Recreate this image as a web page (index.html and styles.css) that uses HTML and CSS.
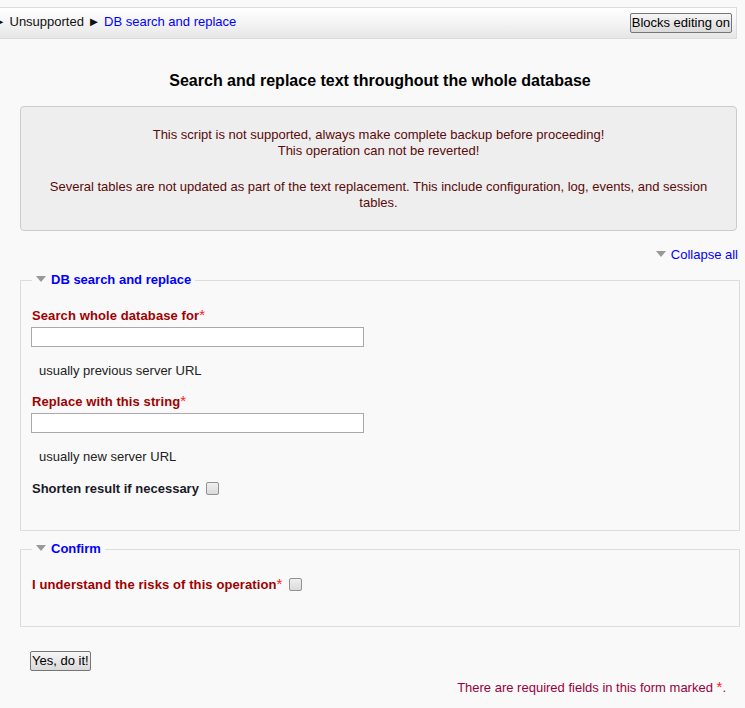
FILE: index.html
```html
<!DOCTYPE html>
<html lang="en">
<head>
<meta charset="utf-8">
<title>DB search and replace</title>
<link rel="stylesheet" href="styles.css">
</head>
<body>
<div class="navbar">
  <div class="breadcrumb"><span class="sep">►</span> Unsupported <span class="sep">►</span> <a href="#" class="link">DB search and replace</a></div>
  <button class="btn" type="button">Blocks editing on</button>
</div>
<div class="main">
  <h2 class="title">Search and replace text throughout the whole database</h2>
  <div class="notice">
    <p class="notice-p">This script is not supported, always make complete backup before proceeding!<br>This operation can not be reverted!</p>
    <p class="notice-p notice-gap">Several tables are not updated as part of the text replacement. This include configuration, log, events, and session tables.</p>
  </div>
  <div class="collapse-row"><a href="#" class="link collapse-link"><span class="tri"></span>Collapse all</a></div>
  <form class="mform">
    <fieldset class="fs">
      <legend class="fs-legend"><span class="tri"></span>DB search and replace</legend>
      <div class="lbl req first">Search whole database for<span class="ast">*</span></div>
      <input class="txt" type="text">
      <div class="help">usually previous server URL</div>
      <div class="lbl req">Replace with this string<span class="ast">*</span></div>
      <input class="txt" type="text">
      <div class="help">usually new server URL</div>
      <div class="lbl plain">Shorten result if necessary <input class="chk" type="checkbox"></div>
    </fieldset>
    <fieldset class="fs fs-second">
      <legend class="fs-legend"><span class="tri"></span>Confirm</legend>
      <div class="lbl req first">I understand the risks of this operation<span class="ast">*</span> <input class="chk" type="checkbox"></div>
    </fieldset>
    <div class="submit-row"><button class="btn" type="button">Yes, do it!</button></div>
    <div class="req-note">There are required fields in this form marked <span class="ast">*</span>.</div>
  </form>
</div>
</body>
</html>
```
FILE: styles.css
```css
html, body {
  margin: 0;
  padding: 0;
}
body {
  background: #f9f9f9;
  font-family: "Liberation Sans", Arial, sans-serif;
  font-size: 13px;
  line-height: 16px;
  color: #222;
  overflow: hidden;
}
.navbar {
  margin: 7px 8px 0 -20px;
  height: 30px;
  border: 1px solid #dcdcdc;
  border-left: none;
  background: linear-gradient(#ffffff, #f4f4f4 50%, #e6e6e6);
  display: flex;
  align-items: center;
  justify-content: space-between;
  padding: 0 4px 0 13px;
}
.breadcrumb {
  color: #111;
  white-space: nowrap;
  margin-top: -2px;
}
.sep {
  color: #111;
}
.link {
  color: #0000ff;
  text-decoration: none;
}
.btn {
  font-family: "Liberation Sans", Arial, sans-serif;
  font-size: 13px;
  line-height: 16px;
  height: 20px;
  padding: 0 1px;
  border: 1px solid #767676;
  border-radius: 2px;
  background: linear-gradient(#f6f6f6, #e8e8e8 50%, #dadada);
  color: #000;
}
.main {
  margin: 0 5px 0 20px;
}
.title {
  margin: 32px 0 16px;
  font-size: 16px;
  line-height: 19px;
  font-weight: bold;
  text-align: center;
  color: #000;
}
.notice {
  margin-right: 3px;
  border: 1px solid #cccccc;
  border-radius: 4px;
  background: #eeeeee;
  padding: 20px 15px 19px;
  text-align: center;
  color: #5a0a0a;
}
.notice-p {
  margin: 0;
}
.notice-gap {
  margin-top: 20px;
}
.collapse-row {
  margin-top: 16px;
  text-align: right;
  padding-right: 2px;
}
.tri {
  display: inline-block;
  width: 0;
  height: 0;
  border-left: 5px solid transparent;
  border-right: 5px solid transparent;
  border-top: 6px solid #999;
  margin-right: 5px;
  vertical-align: 2px;
}
.mform {
  margin: 0;
}
.fs {
  margin: 9px 0 0;
  border: 1px solid #dcdcdc;
  padding: 0 11px 33px;
  min-width: 0;
}
.fs-second {
  margin-top: 10px;
}
.fs-legend {
  padding: 0 4px;
  font-weight: bold;
  color: #0000ff;
  line-height: 16px;
}
.lbl {
  margin-top: 15px;
  font-weight: bold;
  line-height: 16px;
}
.lbl.plain {
  margin-top: 16px;
}
.lbl.first {
  margin-top: 20px;
}
.req {
  color: #a00000;
  letter-spacing: 0.1px;
}
.plain {
  color: #1a1a2a;
}
.ast {
  color: #ff2020;
  font-weight: normal;
  font-size: 15px;
  line-height: 0;
  letter-spacing: 0;
}
.txt {
  display: block;
  box-sizing: border-box;
  width: 333px;
  height: 20px;
  margin: 3px 0 0 -1px;
  border: 1px solid #a9a9a9;
  background: #fff;
  padding: 0 2px;
  font: 13px "Liberation Sans", Arial, sans-serif;
}
.help {
  margin-top: 16px;
  padding-left: 7px;
  color: #222;
}
.chk {
  appearance: none;
  -webkit-appearance: none;
  width: 13px;
  height: 13px;
  margin: 0 0 0 3px;
  border: 1px solid #929292;
  border-radius: 2px;
  background: linear-gradient(#f0f0f0, #dadada);
  vertical-align: -2px;
  box-sizing: border-box;
}
.submit-row {
  margin-top: 24px;
  padding-left: 10px;
}
.req-note {
  margin-top: 9px;
  text-align: right;
  padding-right: 14px;
  color: #99003a;
}
```
